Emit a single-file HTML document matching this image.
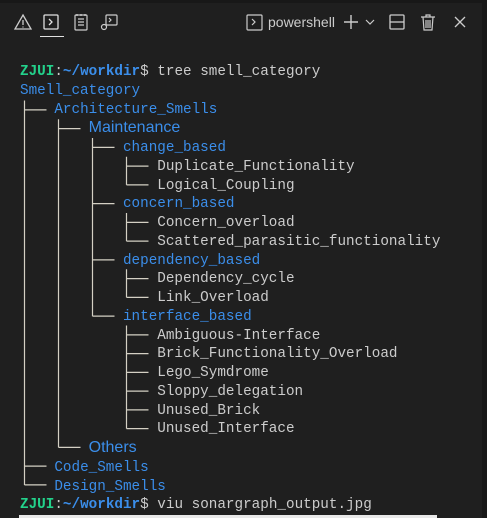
<!DOCTYPE html><html><head><style>
body{margin:0;width:487px;height:518px;background:#1f1f1f;overflow:hidden;position:relative;font-family:"Liberation Sans",sans-serif}
.top{position:absolute;left:0;top:0;width:487px;height:3px;background:#181818}
.rb{position:absolute;right:0;top:0;width:5px;height:518px;background:#181818}
pre{position:absolute;left:20px;top:63px;margin:0;font-family:"Liberation Mono",monospace;font-size:14.3px;line-height:18.75px;color:#cccccc}
.b{color:#3b8eea}.g{color:#23d18b;font-weight:bold}
.s{font-family:"Liberation Sans",sans-serif;font-size:16px}
.ic{position:absolute;top:12px}
.t{position:absolute;left:268px;top:14px;color:#cccccc;font-size:14px}
.img{position:absolute;left:19px;top:515px;width:418px;height:3px;background:#e8e8e8}
.tree{position:absolute;left:0;top:0}
</style></head><body>
<div class="top"></div><div class="rb"></div>
<svg class="ic" style="left:13px" width="20" height="20" viewBox="0 0 20 20" fill="none" stroke="#cccccc" stroke-width="1.3"><path d="M10 3L18 17H2Z"/><path d="M10 8v5M10 14.5v1"/></svg>
<svg class="ic" style="left:41px" width="20" height="20" viewBox="0 0 20 20" fill="none" stroke="#e0e0e0" stroke-width="1.3"><rect x="3" y="3" width="14" height="14" rx="1"/><path d="M8 7l3 3-3 3"/></svg>
<div style="position:absolute;left:40px;top:36px;width:24px;height:1px;background:#e0e0e0"></div>
<svg class="ic" style="left:71px" width="20" height="20" viewBox="0 0 20 20" fill="none" stroke="#cccccc" stroke-width="1.2"><rect x="4" y="3" width="12" height="15" rx="1"/><path d="M7 7h6M7 10h6M7 13h6M6 2v2M10 2v2M14 2v2"/></svg>
<svg class="ic" style="left:99px" width="20" height="20" viewBox="0 0 20 20" fill="none" stroke="#cccccc" stroke-width="1.2"><rect x="7" y="3" width="11" height="10" rx="1"/><path d="M10 6l2 2-2 2"/><circle cx="5" cy="15" r="2.5"/></svg>
<svg class="ic" style="left:245px" width="20" height="20" viewBox="0 0 20 20" fill="none" stroke="#cccccc" stroke-width="1.2"><rect x="2" y="3" width="15" height="15" rx="1"/><path d="M7 7l3 3-3 3"/></svg>
<div class="t">powershell</div>
<svg class="ic" style="left:341px" width="20" height="20" viewBox="0 0 20 20" fill="none" stroke="#cccccc" stroke-width="1.4"><path d="M10 3v14M3 10h14"/></svg>
<svg class="ic" style="left:364px" width="12" height="20" viewBox="0 0 12 20" fill="none" stroke="#cccccc" stroke-width="1.2"><path d="M2 8l4 4 4-4"/></svg>
<svg class="ic" style="left:387px" width="20" height="20" viewBox="0 0 20 20" fill="none" stroke="#cccccc" stroke-width="1.3"><rect x="3" y="3" width="14" height="14" rx="1"/><path d="M3 10h14"/></svg>
<svg class="ic" style="left:418px" width="20" height="20" viewBox="0 0 20 20" fill="none" stroke="#cccccc" stroke-width="1.2"><path d="M3 5h14M8 5V3h4v2M5 5l1 13h8l1-13M8 8v8M10 8v8M12 8v8"/></svg>
<svg class="ic" style="left:450px" width="20" height="20" viewBox="0 0 20 20" fill="none" stroke="#cccccc" stroke-width="1.3"><path d="M5 5l10 10M15 5L5 15"/></svg>
<svg class="tree" width="487" height="518" fill="none" stroke="#d4d0c4" stroke-width="1.2">
<path d="M24.5 100.5V485M24.5 109.9h22M24.5 466.1h22M24.5 484.9h22"/>
<path d="M58.5 119.25V447.4M58.5 128.65h22M58.5 447.4h22"/>
<path d="M92.5 138V316.2M92.5 147.4h22M92.5 203.65h22M92.5 259.9h22M92.5 316.15h22"/>
<path d="M126.5 156.75V184.9M126.5 166.15h22M126.5 184.9h22"/>
<path d="M126.5 213V241.15M126.5 222.4h22M126.5 241.15h22"/>
<path d="M126.5 269.25V297.4M126.5 278.65h22M126.5 297.4h22"/>
<path d="M126.5 325.5V428.65M126.5 334.9h22M126.5 353.65h22M126.5 372.4h22M126.5 391.15h22M126.5 409.9h22M126.5 428.65h22"/>
</svg>
<pre><span class="g">ZJUI</span>:<span class="b" style="font-weight:bold">~/workdir</span>$ tree smell_category
<span class="b">Smell_category</span>
    <span class="b">Architecture_Smells</span>
        <span class="b s">Maintenance</span>
            <span class="b">change_based</span>
                Duplicate_Functionality
                Logical_Coupling
            <span class="b">concern_based</span>
                Concern_overload
                Scattered_parasitic_functionality
            <span class="b">dependency_based</span>
                Dependency_cycle
                Link_Overload
            <span class="b">interface_based</span>
                Ambiguous-Interface
                Brick_Functionality_Overload
                Lego_Symdrome
                Sloppy_delegation
                Unused_Brick
                Unused_Interface
        <span class="b s">Others</span>
    <span class="b">Code_Smells</span>
    <span class="b">Design_Smells</span>
<span class="g">ZJUI</span>:<span class="b" style="font-weight:bold">~/workdir</span>$ viu sonargraph_output.jpg</pre>
<div class="img"></div>
</body></html>
